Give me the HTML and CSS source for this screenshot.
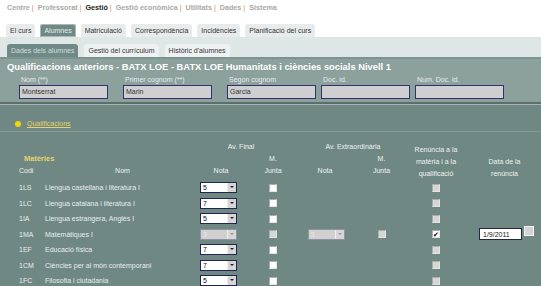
FILE: index.html
```html
<!DOCTYPE html>
<html lang="ca">
<head>
    <meta charset="UTF-8">
    <title>Qualificacions</title>
    <link rel="stylesheet" href="styles.css">
</head>
<body>

    <div class="topnav">
        <a href="#">Centre</a><span class="sep">|</span>
        <a href="#">Professorat</a><span class="sep">|</span>
        <a href="#" class="current">Gestió</a><span class="sep">|</span>
        <a href="#">Gestió econòmica</a><span class="sep">|</span>
        <a href="#">Utilitats</a><span class="sep">|</span>
        <a href="#">Dades</a><span class="sep">|</span>
        <a href="#">Sistema</a>
    </div>

    <ul class="tabs">
        <li>El curs</li>
        <li class="active">Alumnes</li>
        <li>Matriculació</li>
        <li>Correspondència</li>
        <li>Incidències</li>
        <li>Planificació del curs</li>
    </ul>

    <div class="subband">
        <ul class="subtabs">
            <li class="active">Dades dels alumnes</li>
            <li>Gestió del currículum</li>
            <li>Històric d'alumnes</li>
        </ul>
    </div>

    <div class="header">
        <h1>Qualificacions anteriors - BATX LOE - BATX LOE Humanitats i ciències socials Nivell 1</h1>
        <div class="fields">
            <div class="field wide"><label>Nom (**)</label><div class="box">Montserrat</div></div>
            <div class="field wide"><label>Primer cognom (**)</label><div class="box">Marin</div></div>
            <div class="field"><label>Segon cognom</label><div class="box">Garcia</div></div>
            <div class="field"><label>Doc. id.</label><div class="box"></div></div>
            <div class="field"><label>Num. Doc. id.</label><div class="box"></div></div>
        </div>
    </div>

    <div class="main">
        <div class="section"><span class="dot"></span><a href="#">Qualificacions</a></div>

        <table class="grades">
            <colgroup>
                <col class="c-codi"><col class="c-nom"><col class="c-nota"><col class="c-junta">
                <col class="c-xnota"><col class="c-xjunta"><col class="c-ren"><col class="c-data">
            </colgroup>
            <thead>
                <tr>
                    <th colspan="2"></th>
                    <th colspan="2" class="avf">Av. Final</th>
                    <th colspan="2">Av. Extraordinària</th>
                    <th rowspan="3" class="ren">Renúncia a la<br>matèria i a la<br>qualificació</th>
                    <th rowspan="3" class="data">Data de la<br>renúncia</th>
                </tr>
                <tr>
                    <th colspan="2" class="mat">Matèries</th>
                    <th></th><th>M.</th><th></th><th class="xj">M.</th>
                </tr>
                <tr>
                    <th class="left">Codi</th><th class="nom">Nom</th><th>Nota</th><th>Junta</th><th>Nota</th><th class="xj">Junta</th>
                </tr>
            </thead>
            <tbody>
                <tr>
                    <td>1LS</td><td>Llengua castellana i literatura I</td>
                    <td class="l"><span class="sel"><span>5</span><i></i></span></td>
                    <td><span class="cb"></span></td><td></td><td class="xj"></td>
                    <td><span class="cb off"></span></td><td></td>
                </tr>
                <tr>
                    <td>1LC</td><td>Llengua catalana i literatura I</td>
                    <td class="l"><span class="sel"><span>7</span><i></i></span></td>
                    <td><span class="cb"></span></td><td></td><td class="xj"></td>
                    <td><span class="cb off"></span></td><td></td>
                </tr>
                <tr>
                    <td>1IA</td><td>Llengua estrangera, Anglès I</td>
                    <td class="l"><span class="sel"><span>5</span><i></i></span></td>
                    <td><span class="cb"></span></td><td></td><td class="xj"></td>
                    <td><span class="cb off"></span></td><td></td>
                </tr>
                <tr>
                    <td>1MA</td><td>Matemàtiques I</td>
                    <td class="l"><span class="sel off"><span>3</span><i></i></span></td>
                    <td><span class="cb off"></span></td>
                    <td class="xs"><span class="sel off"><span>3</span><i></i></span></td>
                    <td class="xj"><span class="cb off"></span></td>
                    <td><span class="cb on">&#10004;</span></td>
                    <td class="l"><span class="date">1/9/2011</span><span class="cal"></span></td>
                </tr>
                <tr>
                    <td>1EF</td><td>Educació física</td>
                    <td class="l"><span class="sel"><span>7</span><i></i></span></td>
                    <td><span class="cb"></span></td><td></td><td class="xj"></td>
                    <td><span class="cb off"></span></td><td></td>
                </tr>
                <tr>
                    <td>1CM</td><td>Ciències per al món contemporani</td>
                    <td class="l"><span class="sel"><span>7</span><i></i></span></td>
                    <td><span class="cb"></span></td><td></td><td class="xj"></td>
                    <td><span class="cb off"></span></td><td></td>
                </tr>
                <tr>
                    <td>1FC</td><td>Filosofia i ciutadania</td>
                    <td class="l"><span class="sel"><span>5</span><i></i></span></td>
                    <td><span class="cb"></span></td><td></td><td class="xj"></td>
                    <td><span class="cb off"></span></td><td></td>
                </tr>
            </tbody>
        </table>
    </div>

</body>
</html>
```

FILE: styles.css
```css
html {
    font-family: "Liberation Sans", Arial, sans-serif;
    font-size: 7px;
}

body {
    margin: 0;
    width: 541px;
    height: 286px;
    overflow: hidden;
    background: #fff;
}

/* top menu */
.topnav {
    height: 16px;
    line-height: 16px;
    padding-left: 7px;
    font-weight: bold;
    font-size: 7.2px;
}

.topnav a {
    color: #a8a8a8;
    text-decoration: none;
}

.topnav a.current {
    color: #222;
}

.topnav .sep {
    color: #e0883a;
    margin: 0 2px;
    font-weight: normal;
}

/* tabs */
.tabs {
    display: flex;
    gap: 5px;
    list-style: none;
    margin: 8px 0 0 0;
    padding: 0 0 0 6px;
}

.tabs li {
    background: #e7ebeb;
    color: #333;
    height: 13px;
    line-height: 13px;
    padding: 0 4px;
    border-radius: 3px 3px 0 0;
}

.tabs li.active {
    background: #6f8a86;
    color: #e4eceb;
    box-shadow: inset 0 0 0 1px #a7b8b5;
}

.subband {
    background: #dfe6e6;
    height: 20px;
    display: flex;
    align-items: flex-end;
}

.subtabs {
    display: flex;
    gap: 6px;
    list-style: none;
    margin: 0;
    padding: 0 0 0 7px;
}

.subtabs li {
    background: #eef1f1;
    color: #333;
    height: 13px;
    line-height: 13px;
    padding: 0 4px;
    border-radius: 3px 3px 0 0;
}

.subtabs li.active {
    background: #6f8a86;
    color: #cfdcda;
}

/* pupil header */
.header {
    background: #8ca09c;
    border-top: 2px solid #7d938f;
    border-bottom: 2px solid #5c6e6a;
    padding: 3px 0 3px 7px;
}

.header h1 {
    margin: 0;
    color: #fff;
    font-size: 9.35px;
    line-height: 11px;
}

.fields {
    display: flex;
    margin-top: 2px;
    padding-left: 12px;
}

.field {
    width: 94px;
}

.field.wide {
    width: 104px;
}

.field label {
    display: block;
    color: #e6ecea;
    height: 9px;
    line-height: 9px;
    padding-left: 2px;
}

.field .box {
    width: 85px;
    height: 12px;
    line-height: 12px;
    margin-top: 1px;
    background: #cfcfd1;
    border: 1px solid #2e3370;
    color: #333;
    padding-left: 2px;
    box-sizing: content-box;
}

/* main area */
.main {
    background: #6f8884;
    height: 200px;
    border-top: 1px solid #a9b7b4;
}

.section {
    height: 27px;
    padding: 15px 0 0 15px;
    box-sizing: border-box;
    border-bottom: 1px solid #849894;
    display: flex;
    align-items: flex-start;
}

.section .dot {
    width: 6px;
    height: 6px;
    border-radius: 50%;
    background: #f2d40c;
    margin: 1px 6px 0 0;
}

.section a {
    color: #e6d46a;
    text-decoration: underline;
}

.grades {
    margin: 9px 0 0 15px;
    border-collapse: collapse;
    table-layout: fixed;
    width: 526px;
    color: #e8eeec;
}

.c-codi { width: 26px; }
.c-nom { width: 155px; }
.c-nota { width: 50px; }
.c-junta { width: 54px; }
.c-xnota { width: 50px; }
.c-xjunta { width: 56px; }
.c-ren { width: 60px; }
.c-data { width: 75px; }

.grades th {
    font-weight: normal;
    color: #eef2f0;
    height: 12px;
    line-height: 12px;
    padding: 0;
    text-align: center;
    vertical-align: bottom;
}

.grades th.left {
    text-align: left;
    padding-left: 4px;
}

.grades th.nom {
    padding-left: 8px;
}

.grades th.avf {
    padding-right: 14px;
}

.grades th.mat {
    text-align: left;
    padding-left: 9px;
    color: #e6d46a;
    font-weight: bold;
    font-size: 7.5px;
}

.grades th.data {
    padding-left: 2px;
}

.grades .xj {
    padding-left: 7px;
}

.grades thead tr:last-child th {
    padding-bottom: 3px;
}

.grades td {
    height: 15.5px;
    padding: 0;
    text-align: center;
    vertical-align: middle;
}

.grades td:nth-child(1),
.grades td:nth-child(2) {
    text-align: left;
    padding-left: 4px;
}

.grades td.l {
    text-align: left;
    padding-left: 4px;
}

.grades td.xs {
    padding-left: 2px;
}

.grades td.l:last-child {
    padding-left: 13px;
}

/* drop-down */
.sel {
    display: inline-flex;
    width: 37px;
    height: 11px;
    background: #fff;
    border: 1px solid #20264f;
    box-sizing: border-box;
    vertical-align: middle;
    color: #111;
    text-align: left;
}

.sel span {
    flex: 1;
    line-height: 9px;
    padding-left: 2px;
}

.sel i {
    width: 8px;
    background: #d6d6d6;
    border-left: 1px solid #eee;
    position: relative;
}

.sel i::after {
    content: "";
    position: absolute;
    left: 2px;
    top: 3px;
    border-left: 2px solid transparent;
    border-right: 2px solid transparent;
    border-top: 2px solid #222;
}

.sel.off {
    background: #cfd0cf;
    border-color: #8e93a8;
    color: #e9e9e9;
}

.sel.off i::after {
    border-top-color: #999;
}

/* check boxes */
.cb {
    display: inline-block;
    width: 8px;
    height: 8px;
    background: #fff;
    border: 1px solid #a8aeac;
    border-right-color: #e4e4e4;
    border-bottom-color: #e4e4e4;
    box-sizing: border-box;
    vertical-align: middle;
    font-size: 7px;
    line-height: 7px;
    color: #000;
}

.cb.off {
    background: #d6d6d4;
}

.cb.on {
    background: #fff;
}

/* date */
.date {
    display: inline-block;
    width: 43px;
    height: 12px;
    line-height: 11px;
    background: #fff;
    border: 1px solid #23283f;
    box-sizing: border-box;
    color: #222;
    padding-left: 3px;
    vertical-align: middle;
}

.cal {
    display: inline-block;
    width: 8px;
    height: 8px;
    margin-left: 2px;
    background: #d4d4d8;
    border: 1px solid #f4f4f4;
    vertical-align: top;
    margin-top: -2px;
}
```
